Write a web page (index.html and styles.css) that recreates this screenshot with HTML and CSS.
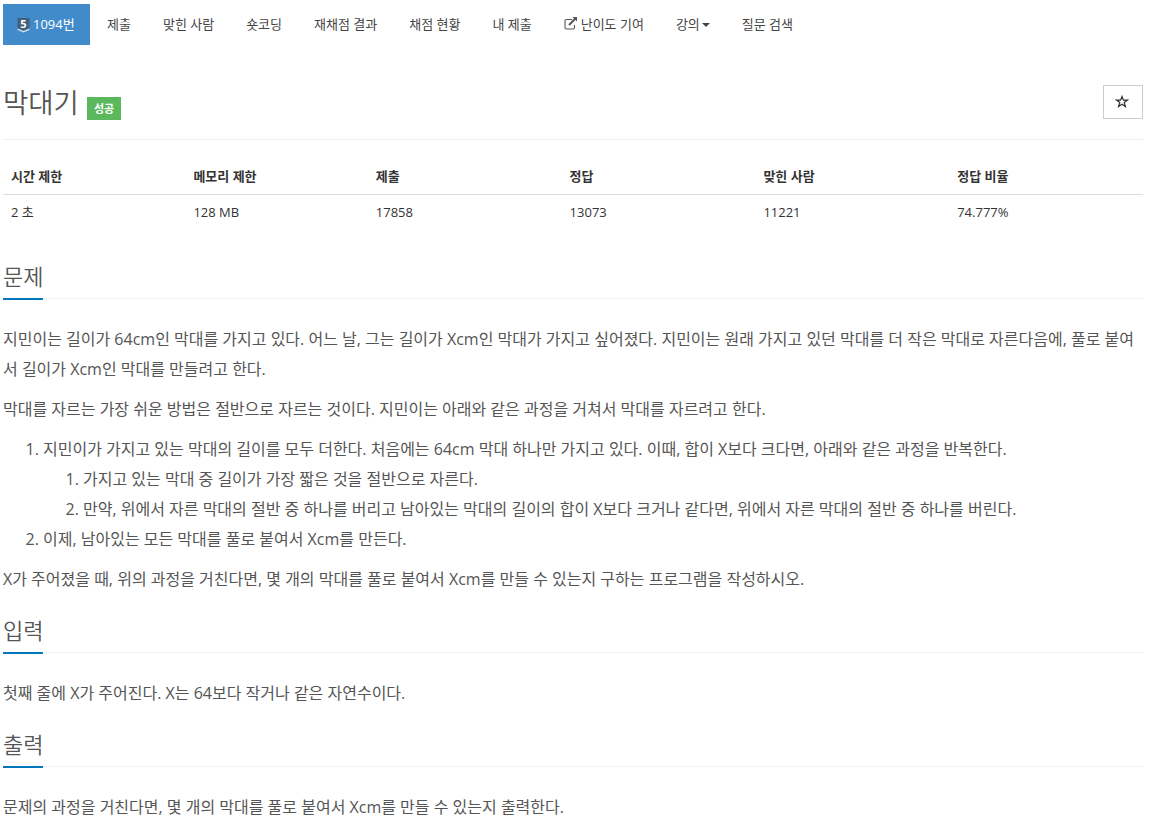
FILE: index.html
```
<!DOCTYPE html>
<html lang="ko">
<head>
    <title>1094번: 막대기</title>
    <meta charset="UTF-8">
    <meta name="viewport" content="width=device-width, initial-scale=1.0">
    <link rel="stylesheet" href="styles.css">
</head>
<body>
    <div class="container">
        <ul class="problem-menu">
            <li class="active"><a href="#"><svg class="tier" viewBox="0 0 13 16"><path d="M.5 1h12v10l-6 2.500-6-2.500z" fill="#435f7a"/><path d="M.5 11.500l6 2.500 6-2.500V13l-6 2.500-6-2.500z" fill="#d5dde5"/><text x="6.500" y="10.500" text-anchor="middle">5</text></svg><span>1094번</span></a></li>
            <li><a href="#"><span>제출</span></a></li>
            <li><a href="#"><span>맞힌 사람</span></a></li>
            <li><a href="#"><span>숏코딩</span></a></li>
            <li><a href="#"><span>재채점 결과</span></a></li>
            <li><a href="#"><span>채점 현황</span></a></li>
            <li><a href="#"><span>내 제출</span></a></li>
            <li><a href="#"><svg class="external" viewBox="0 0 14 13"><path d="M8 2.500H2.500Q1 2.500 1 4v6.500Q1 12 2.500 12H9q1.500 0 1.500-1.500V8" fill="none" stroke="#555" stroke-width="1.100"/><path d="M5 8l6.500-6.500" stroke="#555" stroke-width="2"/><path d="M8.500 0H13v4.500z" fill="#555"/></svg><span>난이도 기여</span></a></li>
            <li><a href="#"><span>강의</span><i class="caret"></i></a></li>
            <li><a href="#"><span>질문 검색</span></a></li>
        </ul>

        <div class="page-header">
            <h1>막대기</h1>
            <span class="label">성공</span>
            <button class="favorite"><svg viewBox="0 0 14 13"><path d="M7 1.500l1.400 3.600h4.100L9.200 7.500l1.200 4L7 9.200l-3.400 2.300 1.200-4L1.500 5.100h4.100z"/></svg></button>
        </div>

        <table class="info">
            <thead>
                <tr><th>시간 제한</th><th>메모리 제한</th><th>제출</th><th>정답</th><th>맞힌 사람</th><th>정답 비율</th></tr>
            </thead>
            <tbody>
                <tr><td>2 초</td><td>128 MB</td><td>17858</td><td>13073</td><td>11221</td><td>74.777%</td></tr>
            </tbody>
        </table>

        <section>
            <div class="headline"><h2>문제</h2></div>
            <div class="problem-text">
                <p>지민이는 길이가 64cm인 막대를 가지고 있다. 어느 날, 그는 길이가 Xcm인 막대가 가지고 싶어졌다. 지민이는 원래 가지고 있던 막대를 더 작은 막대로 자른다음에, 풀로 붙여<br>서 길이가 Xcm인 막대를 만들려고 한다.</p>
                <p>막대를 자르는 가장 쉬운 방법은 절반으로 자르는 것이다. 지민이는 아래와 같은 과정을 거쳐서 막대를 자르려고 한다.</p>
                <ol>
                    <li>지민이가 가지고 있는 막대의 길이를 모두 더한다. 처음에는 64cm 막대 하나만 가지고 있다. 이때, 합이 X보다 크다면, 아래와 같은 과정을 반복한다.
                        <ol>
                            <li>가지고 있는 막대 중 길이가 가장 짧은 것을 절반으로 자른다.</li>
                            <li>만약, 위에서 자른 막대의 절반 중 하나를 버리고 남아있는 막대의 길이의 합이 X보다 크거나 같다면, 위에서 자른 막대의 절반 중 하나를 버린다.</li>
                        </ol>
                    </li>
                    <li>이제, 남아있는 모든 막대를 풀로 붙여서 Xcm를 만든다.</li>
                </ol>
                <p>X가 주어졌을 때, 위의 과정을 거친다면, 몇 개의 막대를 풀로 붙여서 Xcm를 만들 수 있는지 구하는 프로그램을 작성하시오.</p>
            </div>
        </section>

        <section>
            <div class="headline"><h2>입력</h2></div>
            <div class="problem-text">
                <p>첫째 줄에 X가 주어진다. X는 64보다 작거나 같은 자연수이다.</p>
            </div>
        </section>

        <section>
            <div class="headline"><h2>출력</h2></div>
            <div class="problem-text">
                <p>문제의 과정을 거친다면, 몇 개의 막대를 풀로 붙여서 Xcm를 만들 수 있는지 출력한다.</p>
            </div>
        </section>
    </div>
</body>
</html>
```
FILE: styles.css
```
* {
    box-sizing: border-box;
}

body {
    margin: 0;
    height: 820px;
    overflow: hidden;
    background: #fff;
    color: #333;
    font-family: "Open Sans", "Noto Sans CJK KR", sans-serif;
    font-size: 13px;
    line-height: 20px;
}

.container {
    width: 1140px;
    margin-left: 3px;
    padding-top: 4px;
}

.problem-menu {
    display: flex;
    gap: 2px;
    height: 41px;
    margin: 0;
    padding: 0;
    list-style: none;
}

.problem-menu a {
    display: flex;
    align-items: center;
    height: 41px;
    padding: 0 15px 2px;
    color: #444;
    font-size: 13px;
    white-space: nowrap;
    text-decoration: none;
}

.problem-menu .active a {
    width: 87px;
    padding: 0 14px 2px;
    background: #428bca;
    color: #fff;
}

.tier {
    width: 13px;
    height: 16px;
    margin: 2px 3px 0 0;
}

.tier text {
    fill: #fff;
    font-size: 11px;
    font-weight: 700;
}

.external {
    width: 14px;
    height: 13px;
    margin-right: 3px;
}

.caret {
    margin: 2px 0 0 2px;
    border-top: 4px solid #444;
    border-right: 4px solid transparent;
    border-left: 4px solid transparent;
}

.page-header {
    display: flex;
    height: 95px;
    padding-top: 40px;
    border-bottom: 1px solid #eee;
}

h1 {
    width: 77px;
    margin: 0;
    color: #555;
    font-size: 27.5px;
    font-weight: 350;
    line-height: 35px;
}

.label {
    width: 34px;
    height: 23px;
    margin: 12px 0 0 7px;
    background: #5cb85c;
    color: #fff;
    font-size: 11px;
    font-weight: 700;
    line-height: 23px;
    text-align: center;
}

.favorite {
    display: flex;
    align-items: center;
    justify-content: center;
    width: 40px;
    height: 34px;
    margin-left: auto;
    padding: 0 2px 2px 0;
    border: 1px solid #ccc;
    background: #fff;
}

.favorite svg {
    width: 14px;
    height: 13px;
    fill: none;
    stroke: #333;
    stroke-width: 1.2;
}

.info {
    width: 100%;
    margin: 19px 0 20px;
    border-collapse: collapse;
    table-layout: fixed;
}

.info th,
.info td {
    width: 17%;
    height: 36px;
    padding: 0 8px;
    text-align: left;
}

.info th:nth-child(-n+2) {
    width: 16%;
}

.info th {
    height: 35px;
    border-bottom: 1px solid #ddd;
    font-size: 13px;
}

.headline {
    height: 40px;
    border-bottom: 1px dotted #e4e9f0;
}

section {
    padding-top: 9px;
}

h2 {
    display: inline-block;
    height: 41px;
    margin: 0;
    border-bottom: 2px solid #0076bd;
    color: #555;
    font-size: 22px;
    font-weight: 350;
    line-height: 35px;
}

.problem-text {
    padding-top: 25px;
    color: #555;
    font-size: 16px;
    font-weight: 380;
    line-height: 30px;
}

.problem-text p {
    margin: 0 0 10px;
    white-space: nowrap;
}

.problem-text ol {
    margin: 0 0 10px;
    padding-left: 40px;
    white-space: nowrap;
}

.problem-text ol ol {
    margin: 0;
}
```
